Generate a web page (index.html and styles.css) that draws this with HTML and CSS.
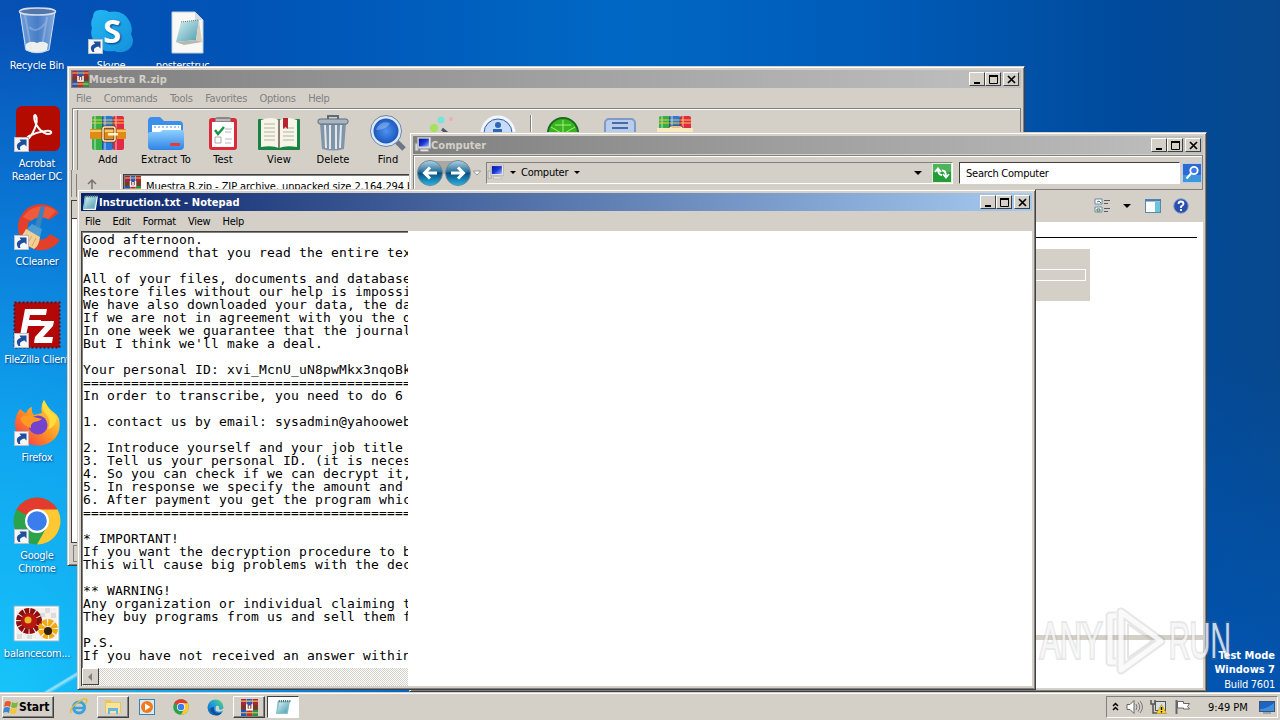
FILE: index.html
```
<!DOCTYPE html>
<html lang="en">
<head>
  <meta charset="UTF-8">
  <meta name="viewport" content="width=device-width, initial-scale=1.0">
  <title>Desktop</title>
  <link rel="stylesheet" href="styles.css">
</head>
<body>

<!-- ICONS -->
<svg width="0" height="0" class="defs">
  <defs>
    <linearGradient id="gBlue" x1="0" y1="0" x2="0" y2="1"><stop offset="0" stop-color="#8fd0ff"/><stop offset="1" stop-color="#2f83e6"/></linearGradient>
    <linearGradient id="gSky" x1="0" y1="0" x2="1" y2="1"><stop offset="0" stop-color="#22b8f3"/><stop offset="1" stop-color="#1590dc"/></linearGradient>
    <linearGradient id="gOrb" x1="0" y1="0" x2="0" y2="1"><stop offset="0" stop-color="#b4d4e4"/><stop offset=".45" stop-color="#28709c"/><stop offset=".5" stop-color="#0b4c7c"/><stop offset="1" stop-color="#25b8e8"/></linearGradient>
    <linearGradient id="gGlass" x1="0" y1="0" x2="1" y2="0"><stop offset="0" stop-color="#a9c6ea"/><stop offset=".5" stop-color="#6c93cf"/><stop offset="1" stop-color="#c7daf2"/></linearGradient>
    <linearGradient id="gFox" x1="1" y1="0" x2="0" y2="1"><stop offset="0" stop-color="#fff04a"/><stop offset=".5" stop-color="#ff9424"/><stop offset="1" stop-color="#f5254e"/></linearGradient>
    <linearGradient id="gEdge" x1="0" y1="1" x2="1" y2="0"><stop offset="0" stop-color="#0c59a4"/><stop offset=".5" stop-color="#1b9de2"/><stop offset="1" stop-color="#5fd95c"/></linearGradient>
    <linearGradient id="gPage" x1="0" y1="0" x2="1" y2="1"><stop offset="0" stop-color="#d8f1f4"/><stop offset="1" stop-color="#4d9db0"/></linearGradient>
    <linearGradient id="gScreen" x1="0" y1="0" x2="1" y2="1"><stop offset="0" stop-color="#0010a0"/><stop offset=".5" stop-color="#1c35d0"/><stop offset="1" stop-color="#9db8ff"/></linearGradient>
    <radialGradient id="gLens"><stop offset="0" stop-color="#4f93f0"/><stop offset="1" stop-color="#1450b8"/></radialGradient>

    <symbol id="shortcut" viewBox="0 0 15 15">
      <rect x=".5" y=".5" width="14" height="14" fill="#f4f6f8" stroke="#b9bec6"/>
      <path d="M4.500 13C1.500 9 3 5.500 7 5L5.500 2.500H12.500V9.500L10.500 7.500C7 8 5 10 6.500 13Z" fill="#1d4f9c"/>
    </symbol>

    <symbol id="rar" viewBox="0 0 36 36">
      <rect x="2" y="1" width="11" height="34" rx="2" fill="#35b046"/><rect x="12" y="1" width="11" height="34" rx="2" fill="#2779dc"/><rect x="23" y="1" width="11" height="34" rx="2" fill="#e12a45"/>
      <path d="M5 1v34M15 1v34M26 1v34" stroke="#fff" stroke-opacity=".35" stroke-width="2"/>
      <path d="M2 5h32M2 8h32" stroke="#f4c83c"/>
      <path d="M12.500 1v34M23 1v34" stroke="#223" stroke-opacity=".4"/>
      <rect x="0" y="14" width="36" height="10" rx="1" fill="#e08a18"/><path d="M0 16h36" stroke="#ffc65c" stroke-width="2"/>
      <rect x="13" y="12" width="12" height="14" rx="2" fill="none" stroke="#7a3a10" stroke-width="3"/><rect x="13" y="12" width="12" height="14" rx="2" fill="none" stroke="#fff0c0" stroke-width="1.500"/><rect x="18" y="18" width="10" height="2.500" fill="#fff3d0"/>
    </symbol>

    <symbol id="rarSmall" viewBox="0 0 16 16">
      <rect width="5" height="16" fill="#a8204c"/><rect x="5.500" width="5" height="16" fill="#2f53c4"/><rect x="11" width="5" height="16" fill="#ad2733"/>
      <rect y="10" width="5" height="6" fill="#1b55c0"/><rect x="5.500" y="10" width="5" height="6" fill="#c42b2b"/><rect x="11" y="10" width="5" height="6" fill="#23944a"/>
      <path d="M0 2h16M0 13h16" stroke="#e8c850"/><rect y="5.500" width="16" height="4.500" fill="#7b3924"/>
      <path d="M5.500 5v5h5V5M8 6v3" fill="none" stroke="#fff" stroke-width="1.500"/>
    </symbol>

    <symbol id="computer" viewBox="0 0 16 16">
      <path d="M1 6h3v7H1z" fill="#d8d8d0" stroke="#999" stroke-width=".6"/>
      <rect x="3.500" y=".5" width="12" height="10" fill="#e8e8e4" stroke="#bbb"/><rect x="4.500" y="1.500" width="9.500" height="7.500" fill="url(#gScreen)"/>
      <path d="M6 11.500h7l1 2H6z" fill="#e9e9e4" stroke="#aaa" stroke-width=".5"/>
    </symbol>

    <symbol id="notepad" viewBox="0 0 16 16">
      <path d="M3 2h12l-2 13H1z" fill="#fff"/><path d="M2.500 2h11.500L12 14H1z" fill="#83bfd0"/><path d="M4 3h9l-2 10H2z" fill="url(#gPage)"/>
      <path d="M4 1v2M6 1v2M8 1v2M10 1v2M12 1v2M14 1v2" stroke="#44686f"/>
    </symbol>

    <symbol id="chrome" viewBox="0 0 48 48">
      <circle cx="24" cy="24" r="23.500" fill="#2ba24c"/>
      <path d="M24 24L3.500 12.500A23.500 23.500 0 0 1 44.500 12.500z" fill="#e33b2e"/><path d="M24 12.500h20.500A23.500 23.500 0 0 1 24 47.500L34 29.500z" fill="#fcc934"/>
      <circle cx="24" cy="24" r="12" fill="#fff"/><circle cx="24" cy="24" r="9.800" fill="#3b7ded"/>
    </symbol>

    <symbol id="winMin" viewBox="0 0 14 12"><path d="M3 9h6" stroke="#000" stroke-width="2"/></symbol>
    <symbol id="winMax" viewBox="0 0 14 12"><path d="M2.500 2v7.500h8V2" fill="none" stroke="#000"/><path d="M2 2h9" stroke="#000" stroke-width="2"/></symbol>
    <symbol id="winClose" viewBox="0 0 14 12"><path d="M3 2l7 7M10 2l-7 7" stroke="#000" stroke-width="1.700"/></symbol>
  </defs>
</svg>

<div class="desktop">

  <!-- DESKTOP ICONS -->
  <div class="icons">
    <div class="column">
      <div class="icon">
        <svg class="icon-img" viewBox="0 0 48 48">
          <path d="M7 4L12 43Q24 50 36 43L42 4z" fill="url(#gGlass)" fill-opacity=".65"/><path d="M13 37Q18 33 24 36Q30 33 35 37L34 43Q24 49 13 43z" fill="#eef0ec"/>
          <path d="M12 8L18 42M34 10L29 40M16 20Q24 28 34 14" fill="none" stroke="#d3e4fa" stroke-opacity=".3" stroke-width="2"/>
          <ellipse cx="24.500" cy="4.500" rx="18" ry="3.500" fill="#5576ad" stroke="#d5e0ee" stroke-width="1.500"/><path d="M7 5L13 43Q24 48 36 43L42 5" fill="none" stroke="#cfdef2"/>
        </svg>
        <span>Recycle Bin</span>
      </div>
      <div class="icon">
        <svg class="icon-img" viewBox="0 0 48 48">
          <rect x="3" y="1" width="44" height="45" rx="6" fill="#b30b00"/>
          <path d="M14 35C19 31 26 18 23 11C21 8 20 13 23 19C27 27 35 31 38 28C40 24 26 26 16 31C11 35 13 38 18 30" fill="none" stroke="#fff" stroke-width="2"/>
        </svg>
        <svg class="shortcut"><use href="#shortcut"/></svg>
        <span>Acrobat<br>Reader DC</span>
      </div>
      <div class="icon">
        <svg class="icon-img" viewBox="0 0 48 48">
          <path d="M46 10A23 23 0 1 0 47 37L37 31A12 12 0 1 1 36 17z" fill="#e2402a"/><path d="M43 8A23 23 0 0 0 10 14L18 18A15 15 0 0 1 35 16z" fill="#f05a3c"/>
          <path d="M28 3l4 1-5 21-5-2z" fill="#3b83bd"/><path d="M19 21l10 5-2 8-14-7z" fill="#4d9bd0"/><path d="M13 26l14 8Q26 43 21 46L4 37Q9 34 13 26z" fill="#f3cf96"/><path d="M14 31l-5 8M19 33l-5 8M23 35l-4 8" stroke="#d8a55d"/>
        </svg>
        <svg class="shortcut"><use href="#shortcut"/></svg>
        <span>CCleaner</span>
      </div>
      <div class="icon">
        <svg class="icon-img" viewBox="0 0 48 48">
          <rect x="1.500" y="1.500" width="45" height="45" fill="#b40808" stroke="#6a0810" stroke-width="2" stroke-dasharray="2 2"/>
          <path d="M12 8h22l-1 6H17l-1 5h12l-1 6H15l-3 15H6z" fill="#fff"/><path d="M25 20h16l-1 5-10 11h10l-1 6H21l1-6 10-11h-8z" fill="#fff"/>
        </svg>
        <svg class="shortcut"><use href="#shortcut"/></svg>
        <span>FileZilla Client</span>
      </div>
      <div class="icon">
        <svg class="icon-img" viewBox="0 0 48 48">
          <path d="M7 10Q10 13 13 14Q16 8 19 8Q18 13 21 16L29 14Q27 7 31 1Q34 8 39 12Q44 15 46 20Q49 34 39 42Q28 50 14 44Q1 37 2 23Q3 15 7 10z" fill="url(#gFox)"/>
          <circle cx="25" cy="26" r="9.500" fill="#7542d0"/><path d="M7 19Q13 14 21 18L29 20Q25 23 21 23Q17 25 18 29Q10 27 7 19z" fill="#ff9a22"/><path d="M31 1Q27 9 33 15Q39 21 35 30Q43 28 44 18Q37 13 31 1z" fill="#ffdd3c"/>
        </svg>
        <svg class="shortcut"><use href="#shortcut"/></svg>
        <span>Firefox</span>
      </div>
      <div class="icon">
        <svg class="icon-img"><use href="#chrome"/></svg>
        <svg class="shortcut"><use href="#shortcut"/></svg>
        <span>Google<br>Chrome</span>
      </div>
      <div class="icon">
        <svg class="icon-img" viewBox="0 0 48 48">
          <rect x="1" y="11" width="45" height="35" fill="#fff" stroke="#8db6c7"/><rect x="3" y="13" width="41" height="31" fill="#f4f1ee"/>
          <path d="M32 13h5v5h-5zM38 18h5v5h-5zM27 18h5v4h-5zM4 39h5v5H4zM14 40h5v4h-5z" fill="#ddd"/>
          <circle cx="16" cy="26" r="9" fill="none" stroke="#8f0d0d" stroke-width="8" stroke-dasharray="4 .8"/><circle cx="16" cy="26" r="8" fill="#b81812"/><circle cx="15" cy="25" r="3.500" fill="#f0b528"/>
          <circle cx="35" cy="34" r="6.500" fill="none" stroke="#f3aa12" stroke-width="7" stroke-dasharray="4 1"/><circle cx="35" cy="36" r="4" fill="#30200c"/>
        </svg>
        <span>balancecom...</span>
      </div>
    </div>
    <div class="column">
      <div class="icon">
        <svg class="icon-img" viewBox="0 0 48 48">
          <path d="M6 10Q6 2 15 3Q20 3 22 5Q37 2 43 15Q46 22 44 27Q49 37 41 43Q34 47 27 44Q12 46 6 33Q3 27 5 21Q3 15 6 10z" fill="url(#gSky)"/>
          <text x="25" y="36" class="skype-s">S</text>
        </svg>
        <svg class="shortcut"><use href="#shortcut"/></svg>
        <span>Skype</span>
      </div>
    </div>
    <div class="column">
      <div class="icon">
        <svg class="icon-img" viewBox="0 0 48 48">
          <path d="M9 5h23l8 8v33H9z" fill="#f8f8f6" stroke="#c2cdd8"/><path d="M32 5v8h8z" fill="#d3dce2"/>
          <path d="M18 15l18-2-3 20-20 2z" fill="url(#gPage)"/><path d="M36 13l3 22-6-2z" fill="#d9cfb8"/><path d="M13 35l20-2 6 2-18 3z" fill="#b5b8b0"/><path d="M18 15l18-2" stroke="#64757b" stroke-dasharray="1 1"/>
        </svg>
        <span>posterstruc...</span>
      </div>
    </div>
  </div>

  <div class="build"><b>Test Mode<br>Windows 7</b><br>Build 7601</div>

  <!-- WINRAR -->
  <div class="window winrar">
    <div class="titlebar inactive">
      <svg width="17" height="16"><use href="#rarSmall"/></svg>
      <span class="title">Muestra R.zip</span>
      <div class="controls"><i><svg><use href="#winMin"/></svg></i><i><svg><use href="#winMax"/></svg></i><i><svg><use href="#winClose"/></svg></i></div>
    </div>
    <div class="menu disabled"><span>File</span><span>Commands</span><span>Tools</span><span>Favorites</span><span>Options</span><span>Help</span></div>
    <div class="rar-tools">
      <div class="tool w56"><svg viewBox="0 0 36 36"><use href="#rar"/></svg>Add</div>
      <div class="tool w60"><svg viewBox="0 0 36 36">
        <path d="M0 6Q0 2 4 2h8l4 4h15q4 0 4 4v18H0z" fill="#3b8eea"/><rect x="4" y="10" width="29" height="16" fill="#fff"/><path d="M6 12h25" stroke="#4d8ed8" stroke-dasharray="2 2"/>
        <path d="M0 19Q0 17 3 17h9l3-2h18q3 0 3 3v13q0 4-4 4H4q-4 0-4-4z" fill="url(#gBlue)"/><rect x="22" y="28" width="10" height="3" rx="1" fill="#e33b38"/></svg>Extract To</div>
      <div class="tool w54"><svg viewBox="0 0 36 36">
        <rect x="4" y="3" width="28" height="32" rx="3" fill="#d92b3c"/><rect x="7" y="7" width="22" height="25" fill="#fff"/><path d="M10 7V4q0-2 3-2h10q3 0 3 2v3z" fill="#8e8587"/><path d="M11 5h14" stroke="#eee"/>
        <path d="M10 15l3 4 6-7" fill="none" stroke="#1e9445" stroke-width="2.500"/><path d="M20 14h7M20 17h6M20 24h7M20 28h6" stroke="#b8b8bd"/><path d="M10 22h6v6h-6z" fill="none" stroke="#aaa"/></svg>Test</div>
      <div class="tool w58"><svg class="wide" viewBox="0 0 42 36">
        <rect x="0" y="4" width="42" height="31" rx="1" fill="#178345"/><path d="M3 5Q13 1 21 5Q29 1 39 5v27Q28 30 21 33Q14 30 3 32z" fill="#f7f4e8"/>
        <path d="M21 5v28" stroke="#655" stroke-width="1.500"/><path d="M6 9h11M6 13h11M6 17h11M6 21h11M6 25h11M25 13h11M25 17h11M25 21h11M25 25h11" stroke="#b5b2a7"/><path d="M25 3h5v11l-2.500-2-2.500 2z" fill="#b82332"/></svg>View</div>
      <div class="tool w50"><svg viewBox="0 0 36 36">
        <path d="M5 8h26l-2 26q-11 3-22 0z" fill="#8295a8"/><path d="M10 10l1 23M15 10v24M21 10v24M26 10l-1 23" stroke="#dfe7ed" stroke-width="2"/><rect x="3" y="4" width="30" height="5" rx="2" fill="#a9b6c2" stroke="#5c6c7b"/><path d="M13 4V1h10v3" fill="none" stroke="#5c6c7b" stroke-width="2"/></svg>Delete</div>
      <div class="tool w60"><svg viewBox="0 0 36 36">
        <path d="M25 25l9 9" stroke="#6c7684" stroke-width="5"/><circle cx="16" cy="16" r="14" fill="url(#gLens)" stroke="#dce8f4" stroke-width="3"/><circle cx="16" cy="16" r="15.500" fill="none" stroke="#6c86ac"/><path d="M6 15Q10 5 20 8Q17 15 6 15z" fill="#b6d8ff" fill-opacity=".4"/></svg>Find</div>
      <div class="tool w50"><svg viewBox="0 0 36 36">
        <circle cx="16" cy="5" r="3.500" fill="#78e2dc"/><circle cx="26" cy="4" r="2" fill="#f0aaba"/><circle cx="9" cy="13" r="4" fill="#a3e25b"/><path d="M17 14l17 14" stroke="#505565" stroke-width="3"/></svg>Wizard</div>
      <div class="tool w60"><svg viewBox="0 0 36 36">
        <circle cx="18" cy="18" r="16" fill="#c8dcf8" stroke="#f2f7ff" stroke-width="3"/><circle cx="18" cy="18" r="14" fill="none" stroke="#3b65a8"/><circle cx="18" cy="10" r="3" fill="#2f67b8"/><path d="M13 16h7v12" fill="none" stroke="#2f67b8" stroke-width="4"/></svg>Info</div>
      <div class="divider"></div>
      <div class="tool w60"><svg viewBox="0 0 36 36">
        <circle cx="18" cy="18" r="15" fill="#37b41e" stroke="#1a6923" stroke-width="2"/><path d="M18 5v24M6 12l24 14M30 12L6 26M10 10h16" stroke="#a9f07f"/></svg>VirusScan</div>
      <div class="tool w54"><svg viewBox="0 0 36 36">
        <rect x="3" y="4" width="30" height="26" rx="4" fill="#b9cdeb" stroke="#7e9acb" stroke-width="2"/><path d="M10 8h16M10 13h16M10 20h16" stroke="#254b8f" stroke-width="1.500"/></svg>Comment</div>
      <div class="tool w56"><svg viewBox="0 0 36 36"><use href="#rar"/><path d="M0 13h36v18H0z" fill="#f8e8bd"/></svg>SFX</div>
    </div>
    <div class="rar-address">
      <div class="up"><svg width="12" height="12" viewBox="0 0 12 12"><path d="M6 12V2M2 6l4-4 4 4" fill="none" stroke="#77736d" stroke-width="1.500"/></svg></div>
      <div class="path"><svg width="16" height="16"><use href="#rarSmall"/></svg><span>Muestra R.zip - ZIP archive, unpacked size 2,164,294 bytes</span></div>
    </div>
    <div class="rar-list"><div class="rar-head"></div></div>
    <div class="rar-status"></div>
  </div>

  <!-- EXPLORER -->
  <div class="window explorer">
    <div class="titlebar inactive">
      <svg width="17" height="17"><use href="#computer"/></svg>
      <span class="title">Computer</span>
      <div class="controls"><i><svg><use href="#winMin"/></svg></i><i><svg><use href="#winMax"/></svg></i><i><svg><use href="#winClose"/></svg></i></div>
    </div>
    <div class="nav">
      <svg class="orbs" viewBox="0 0 68 28">
        <rect x="13" y="2" width="30" height="13" fill="#aaa8a4"/>
        <circle cx="14" cy="14" r="12.500" fill="url(#gOrb)" stroke="#6d8899"/><circle cx="42" cy="14" r="12.500" fill="url(#gOrb)" stroke="#6d8899"/>
        <path d="M21 14H9M14 8.500L8.500 14l5.500 5.500M35 14h12M42 8.500l5.500 5.500-5.500 5.500" fill="none" stroke="#fff" stroke-width="3"/>
        <path d="M57.500 12h7l-3.500 4z" fill="#fff" stroke="#777" stroke-width=".7"/>
      </svg>
      <div class="crumbs">
        <svg width="17" height="18"><use href="#computer"/></svg><b class="arrow"></b><span>Computer</span><b class="arrow"></b>
        <b class="arrow end"></b>
        <svg width="20" height="20" viewBox="0 0 20 20"><rect x=".5" y=".5" width="19" height="19" fill="#249c38" stroke="#dff0db"/><path d="M1 1h18v8H1z" fill="#8fd890" fill-opacity=".4"/><path d="M10 12Q6 12 6 6M3 9l3-3.500L9 9M10 7.500Q14 7.500 14 13M11 11l3 3.500 3-3.500" fill="none" stroke="#fff" stroke-width="1.800"/></svg>
      </div>
      <div class="search">Search Computer</div>
      <svg class="go" width="20" height="20" viewBox="0 0 20 20"><rect x=".5" y=".5" width="19" height="19" fill="#2d69d2" stroke="#b6cff0"/><path d="M1 12h18v7H1z" fill="#4fc3e8" fill-opacity=".5"/><circle cx="12" cy="7.500" r="3.700" fill="#3b7de8" stroke="#fff" stroke-width="1.800"/><path d="M9 10.500l-4.500 5" stroke="#fff" stroke-width="2.200"/></svg>
    </div>
    <div class="commands">
      <svg width="17" height="16" viewBox="0 0 17 16"><path d="M1 1h7v5H1zM1 9h7v5H1z" fill="#fff" stroke="#6489a4"/><path d="M3 4l2-1 2 2M3 11h3v2H3z" fill="none" stroke="#4a704a"/><path d="M10 2.500h6M10 5.500h4M10 10.500h6M10 13.500h4" stroke="#555a68"/></svg>
      <b class="arrow big"></b>
      <svg width="16" height="14" viewBox="0 0 16 14"><rect x=".5" y=".5" width="15" height="13" fill="#fff" stroke="#5a88aa"/><path d="M0 1.500h16" stroke="#487fae" stroke-width="2"/><path d="M10 3h5v10h-5z" fill="#6bc6db"/></svg>
      <svg width="16" height="16" viewBox="0 0 16 16"><circle cx="8" cy="8" r="7.300" fill="#2a4fae" stroke="#8ca3cf"/><path d="M5.500 6Q5.500 3.500 8 3.500T10.500 6Q10.500 7 8 8.500V10M8 11v2" fill="none" stroke="#fff" stroke-width="1.800"/></svg>
    </div>
    <div class="drives">
      <div class="rule"></div>
      <div class="drive"><div class="meter"></div></div>
    </div>
    <div class="details"></div>
  </div>

  <!-- NOTEPAD -->
  <div class="window notepad">
    <div class="titlebar active">
      <svg width="17" height="17"><use href="#notepad"/></svg>
      <span class="title">Instruction.txt - Notepad</span>
      <div class="controls"><i><svg><use href="#winMin"/></svg></i><i><svg><use href="#winMax"/></svg></i><i><svg><use href="#winClose"/></svg></i></div>
    </div>
    <div class="menu"><span>File</span><span>Edit</span><span>Format</span><span>View</span><span>Help</span></div>
    <div class="editor">
      <div class="page">
<pre>Good afternoon.
We recommend that you read the entire tex

All of your files, documents and database
Restore files without our help is impossi
We have also downloaded your data, the da
If we are not in agreement with you the d
In one week we guarantee that the journal
But I think we'll make a deal.

Your personal ID: xvi_McnU_uN8pwMkx3nqoBk
=========================================
In order to transcribe, you need to do 6

1. contact us by email: sysadmin@yahooweb

2. Introduce yourself and your job title
3. Tell us your personal ID. (it is neces
4. So you can check if we can decrypt it,
5. In response we specify the amount and
6. After payment you get the program whic
=========================================

* IMPORTANT!
If you want the decryption procedure to b
This will cause big problems with the dec

** WARNING!
Any organization or individual claiming t
They buy programs from us and sell them f

P.S.
If you have not received an answer within</pre>
        <div class="scrollbar"><div class="scroll-btn"><svg width="6" height="8" viewBox="0 0 6 8"><path d="M5 0v8L1 4z" fill="#808080"/></svg></div></div>
      </div>
    </div>
  </div>

  <!-- WATERMARK -->
  <svg class="watermark" viewBox="0 0 200 70">
    <g class="wm-shadow">
      <text x="4" y="52" textLength="62" lengthAdjust="spacingAndGlyphs">ANY</text><text x="133" y="52" textLength="62" lengthAdjust="spacingAndGlyphs">RUN</text>
      <path d="M80 10h-6v46h6M85 6v58l40-29z"/>
    </g>
    <g class="wm-text">
      <text x="4" y="52" textLength="62" lengthAdjust="spacingAndGlyphs">ANY</text><text x="133" y="52" textLength="62" lengthAdjust="spacingAndGlyphs">RUN</text>
      <path d="M80 10h-6v46h6M85 6v58l40-29z"/><path class="thin" d="M92 18v34l24-17z"/>
    </g>
  </svg>

  <!-- TASKBAR -->
  <div class="taskbar">
    <div class="start">
      <svg width="16" height="16" viewBox="0 0 16 16"><path d="M2 3Q5 1 8 3L7 8Q4 6 1 8z" fill="#e8592a"/><path d="M9 3Q12 5 15 3L14 8Q11 10 8 8z" fill="#7cb83a"/><path d="M1 9Q4 7 7 9L6 14Q3 12 0 14z" fill="#3a85d4"/><path d="M8 9Q11 11 14 9L13 14Q10 16 7 14z" fill="#f6c530"/></svg>
      Start
    </div>
    <div class="tasks">
      <div class="task"><svg width="18" height="18" viewBox="0 0 18 18"><circle cx="9" cy="9.500" r="5.500" fill="none" stroke="#38a2dd" stroke-width="3"/><path d="M5 10h9" stroke="#38a2dd" stroke-width="2.500"/><path d="M1 15Q-1 11 7 5T17 2Q17 4 15 6" fill="none" stroke="#e7ba38" stroke-width="1.500"/></svg></div>
      <div class="task raised"><svg width="18" height="18" viewBox="0 0 18 18"><path d="M1 2h6l1 2h9v11H1z" fill="#e9c65d"/><path d="M2 5h14v10H2z" fill="#f8e49b"/><path d="M4 10h10v6h-2v-3H6v3H4z" fill="#67b8df"/></svg></div>
      <div class="task"><svg width="16" height="16" viewBox="0 0 16 16"><rect x=".5" y=".5" width="15" height="15" fill="#d7ebf8" stroke="#3585bd"/><circle cx="8" cy="8" r="6" fill="#f27a1a"/><path d="M6 4.500l5.500 3.500L6 11.500z" fill="#fff"/></svg></div>
      <div class="task"><svg width="16" height="16"><use href="#chrome"/></svg></div>
      <div class="task"><svg width="17" height="17" viewBox="0 0 17 17"><circle cx="8.500" cy="8.500" r="8" fill="url(#gEdge)"/><path d="M7 8Q6 14 12 14Q15 14 16 12Q12 19 6 15Q0 9 7 8z" fill="#0f4f9e"/><path d="M9 7Q13 6 12 10Q14 12 17 9V11Q13 14 9 12Q8 10 9 7z" fill="#d4d0c8"/></svg></div>
      <div class="task raised"><svg width="17" height="17"><use href="#rarSmall"/></svg></div>
      <div class="task pressed"><svg width="17" height="17"><use href="#notepad"/></svg></div>
    </div>
    <div class="tray">
      <svg width="7" height="10" viewBox="0 0 7 10"><path d="M1 4l2.500-2.500L6 4M1 8l2.500-2.500L6 8" fill="none" stroke="#000" stroke-width="1.500"/></svg>
      <svg width="17" height="16" viewBox="0 0 17 16"><path d="M1 5.500h3l4-4v13l-4-4H1z" fill="#fff" stroke="#666"/><path d="M10 5q2 3 0 6M12 3.500q3.500 4.500 0 9M14 2q5 6 0 12" fill="none" stroke="#777"/></svg>
      <svg width="17" height="16" viewBox="0 0 17 16"><rect x="5.500" y="2.500" width="10" height="9" fill="#d8e0e4" stroke="#555"/><path d="M1 1v4h4V1M3 5v9h4" fill="none" stroke="#555" stroke-width="1.500"/><path d="M11.500 5.500l5 9h-10z" fill="#f8d52a" stroke="#a98500" stroke-width=".6"/><path d="M11.500 8v3M11.500 12v1.500" stroke="#000" stroke-width="1.400"/></svg>
      <svg width="17" height="16" viewBox="0 0 17 16"><path d="M2.500 1v14" stroke="#666" stroke-width="2"/><path d="M3.500 2.500h6v2h6l-2 3 2 2.500h-6v-1h-6z" fill="#fff" stroke="#666"/></svg>
      <span class="clock">9:49 PM</span>
      <svg width="16" height="13" viewBox="0 0 16 13"><rect x=".5" y=".5" width="15" height="10" fill="#1b63c4" stroke="#3f5370"/><path d="M1 8Q8 8 15 2v8H1z" fill="#3b8fdc"/><path d="M4 12h8" stroke="#8796a6" stroke-width="1.500"/></svg>
    </div>
  </div>
</div>

</body>
</html>
```
FILE: styles.css
```
*{box-sizing:border-box}

body {
  margin:0;
  overflow:hidden;
  font-family:'DejaVu Sans Condensed','DejaVu Sans',sans-serif;
  font-stretch:condensed;
  font-size:11px;
  line-height:13px;
  letter-spacing:-.25px;
  color:#000;
}

svg {display:block;flex:none}
.defs {position:absolute}

.desktop {
  position:relative;
  width:1280px;
  height:720px;
  overflow:hidden;
  background:
    linear-gradient(149deg,transparent 48%,rgba(255,255,255,.6) 50%,transparent 53%) -10px 660px/120px 60px no-repeat,
    radial-gradient(ellipse 460px 720px at 0 730px,#18c8fb 0%,rgba(16,168,242,.95) 42%,rgba(12,132,224,.8) 70%,rgba(8,100,200,0) 100%),
    linear-gradient(0deg,rgba(0,90,190,.75),rgba(0,90,190,0) 50%),
    linear-gradient(90deg,#0750b4 0%,#0054b6 20%,#0068c4 48%,#005cb9 68%,#004a9c 88%,#07488d 100%);
}

/* desktop icons */
.icons {
  display:flex;
  padding-top:7px;
}
.column {width:74px}
.column:last-child {width:78px}

.icon {
  position:relative;
  height:98px;
  display:flex;
  flex-direction:column;
  align-items:center;
  text-align:center;
  white-space:nowrap;
  color:#fff;
  text-shadow:1px 1px 2px #003a80;
}

.icon-img {width:48px;height:48px;margin-bottom:4px}
.shortcut {position:absolute;left:14px;top:32px;width:15px;height:15px}
.skype-s {font:bold 33px 'Open Sans',sans-serif;fill:#fff;text-anchor:middle}

.build {
  position:absolute;
  right:5px;
  bottom:28px;
  text-align:right;
  line-height:14.500px;
  color:#fff;
}
.build b {letter-spacing:0}

/* windows */
.window {
  position:absolute;
  display:flex;
  flex-direction:column;
  padding:3px;
  background:#d4d0c8;
  border:1px solid;
  border-color:#d4d0c8 #404040 #404040 #d4d0c8;
  box-shadow:inset 1px 1px #fff,inset -1px -1px #808080;
}

.winrar   {left:67px;top:66px;width:958px;height:500px}
.explorer {left:409px;top:132px;width:798px;height:560px}
.notepad  {left:77px;top:189px;width:959px;height:501px}

.titlebar {
  display:flex;
  align-items:center;
  height:18px;
  flex:none;
  padding:0 2px 0 1px;
  color:#fff;
}

.inactive {background:linear-gradient(90deg,#808080,#c0c0c0);color:#d4d0c8}
.active   {background:linear-gradient(90deg,#0a246a,#a6caf0)}
.title {font-weight:bold;letter-spacing:.06px}

.controls {display:flex;margin-left:auto}
.controls i {
  width:16px;
  height:14px;
  padding:1px;
  background:#d4d0c8;
  border:1px solid;
  border-color:#fff #404040 #404040 #fff;
}
.controls i:last-child {margin-left:2px}
.controls svg {width:14px;height:12px}

.menu {
  display:flex;
  gap:12px;
  height:20px;
  flex:none;
  align-items:center;
  padding-left:4px;
}
.disabled {color:#808080;gap:12.500px;padding-left:5px;letter-spacing:-.3px}

/* winrar */
.rar-tools {
  display:flex;
  height:62px;
  flex:none;
  padding:6px 0 0 7px;
  margin-left:1px;
  border:1px solid #808080;
  border-bottom:0;
  box-shadow:inset 1px 1px #fff,inset 4px 0 #d4d0c8,inset 5px 0 #808080;
}

.tool {display:flex;flex-direction:column;align-items:center;letter-spacing:.1px}
.tool svg {width:36px;height:36px;margin-bottom:2px}
.tool svg.wide {width:42px}
.w50 {width:50px}
.w54 {width:54px}
.w56 {width:56px}
.w58 {width:58px}
.w60 {width:60px}
.divider {width:5px;border-left:1px solid #808080;box-shadow:inset 1px 0 #fff;margin:0 -2px 0 2px}

.rar-address {display:flex;height:27px;flex:none;padding:4px 3px 0 4px;border-left:1px solid #808080}
.up {width:45px;padding:4px 0 0 9px;border-left:1px solid #808080;border-right:1px solid #fff;margin-right:2px}
.path {
  flex:1;
  display:flex;
  gap:5px;
  padding:1px;
  background:#fff;
  border:1px solid #404040;
  box-shadow:inset 1px 1px #808080;
}
.path span {padding-top:4px;letter-spacing:-.08px}

.rar-list {flex:1;margin-top:3px;background:#fff;border:1px solid #404040}
.rar-head {height:18px;background:#d4d0c8;border-bottom:1px solid #404040}
.rar-status {height:17px;flex:none;margin:2px 0 0 2px;border:1px solid #808080}

/* explorer */
.nav {
  display:flex;
  align-items:center;
  height:35px;
  flex:none;
  margin-top:1px;
  padding:0 0 0 2px;
  border:1px solid #808080;
  box-shadow:inset 1px 1px #fff;
}
.orbs {width:68px;height:28px}

.crumbs {
  flex:1;
  display:flex;
  align-items:center;
  height:22px;
  margin:0 6px 0 2px;
  border:1px solid;
  border-color:#808080 #fff #fff #808080;
}
.crumbs span {margin:0 6px 0 5px}

.arrow {
  border:3px solid transparent;
  border-top-color:#000;
  border-bottom:0;
  margin-left:6px;
}
.crumbs span + .arrow {margin-left:0}
.arrow.end {border-width:4px 4px 0;margin:0 10px 0 auto}
.arrow.big {border-width:4px 4px 0;margin:0}

.search {
  width:221px;
  height:22px;
  padding:4px 6px;
  background:#fff;
  border:1px solid;
  border-color:#404040 #fff #fff #404040;
}
.go {margin-left:2px}

.commands {
  display:flex;
  justify-content:flex-end;
  align-items:center;
  height:32px;
  flex:none;
  padding-right:14px;
}
.commands .arrow {margin:0 14px 0 12px}
.commands svg:last-child {margin-left:12px}

.drives {flex:1;background:#fff;padding-top:15px}
.rule {height:1px;background:#000;margin-right:6px}
.drive {
  width:260px;
  height:52px;
  margin:11px 113px 0 auto;
  padding:20px 4px;
  background:#d4d0c8;
}
.meter {height:12px;border:1px solid #fff}
.details {height:53px;flex:none;background:#fff;border-top:5px solid #d4d0c8}

/* notepad */
.editor {flex:1;display:flex;background:#fff;min-height:0}

.page {
  width:327px;
  overflow:hidden;
  display:flex;
  flex-direction:column;
  border:1px solid #404040;
  border-width:1px 0 0 1px;
  box-shadow:inset 1px 1px #808080;
}

pre {
  flex:1;
  margin:0;
  padding:1px 0 0 1px;
  font:13px/13px 'DejaVu Sans Mono',monospace;
  letter-spacing:.174px;
}

.scrollbar {
  height:18px;
  flex:none;
  background:repeating-conic-gradient(#fff 0 25%,#d4d0c8 0 50%) 0 0/2px 2px;
}
.scroll-btn {
  width:17px;
  height:17px;
  padding:4px;
  background:#d4d0c8;
  border:1px solid;
  border-color:#fff #404040 #404040 #fff;
}

.watermark {position:absolute;left:1036px;top:606px;width:200px;height:70px}
.watermark text {font:50px 'Liberation Sans',sans-serif}
.watermark path {fill:none}
.wm-shadow {fill:#888;fill-opacity:.15;stroke:#888;stroke-opacity:.2;stroke-width:4px}
.wm-shadow path {stroke-width:9px;stroke-linejoin:round}
.wm-text {fill:#fff;fill-opacity:.75}
.wm-text path {stroke:#fff;stroke-opacity:.8;stroke-width:5px;stroke-linejoin:round}
.wm-text .thin {stroke:#bbb;stroke-opacity:.4;stroke-width:2px}

/* taskbar */
.taskbar {
  position:absolute;
  left:0;
  right:0;
  bottom:0;
  height:28px;
  display:flex;
  align-items:center;
  padding:2px 2px 0;
  background:#d4d0c8;
  box-shadow:inset 0 1px #d4d0c8,inset 0 2px #fff;
}

.start {
  width:52px;
  height:22px;
  display:flex;
  align-items:center;
  font-weight:bold;
  font-size:12px;
  letter-spacing:-.1px;
  border:1px solid;
  border-color:#fff #404040 #404040 #fff;
  box-shadow:inset -1px -1px #808080;
}

.tasks {display:flex;margin-left:9px;gap:2px}
.task {
  width:32px;
  height:22px;
  display:flex;
  align-items:center;
  justify-content:center;
}
.raised {
  border:1px solid;
  border-color:#fff #404040 #404040 #fff;
  box-shadow:inset -1px -1px #808080;
}
.pressed {
  background:#fff;
  border:1px solid;
  border-color:#404040 #fff #fff #404040;
}

.tray {
  display:flex;
  align-items:center;
  gap:7px;
  height:22px;
  width:172px;
  margin-left:auto;
  padding:0 2px 0 5px;
  border:1px solid;
  border-color:#808080 #fff #fff #808080;
}
.clock {margin:0 auto 0 10px;letter-spacing:0}
```
